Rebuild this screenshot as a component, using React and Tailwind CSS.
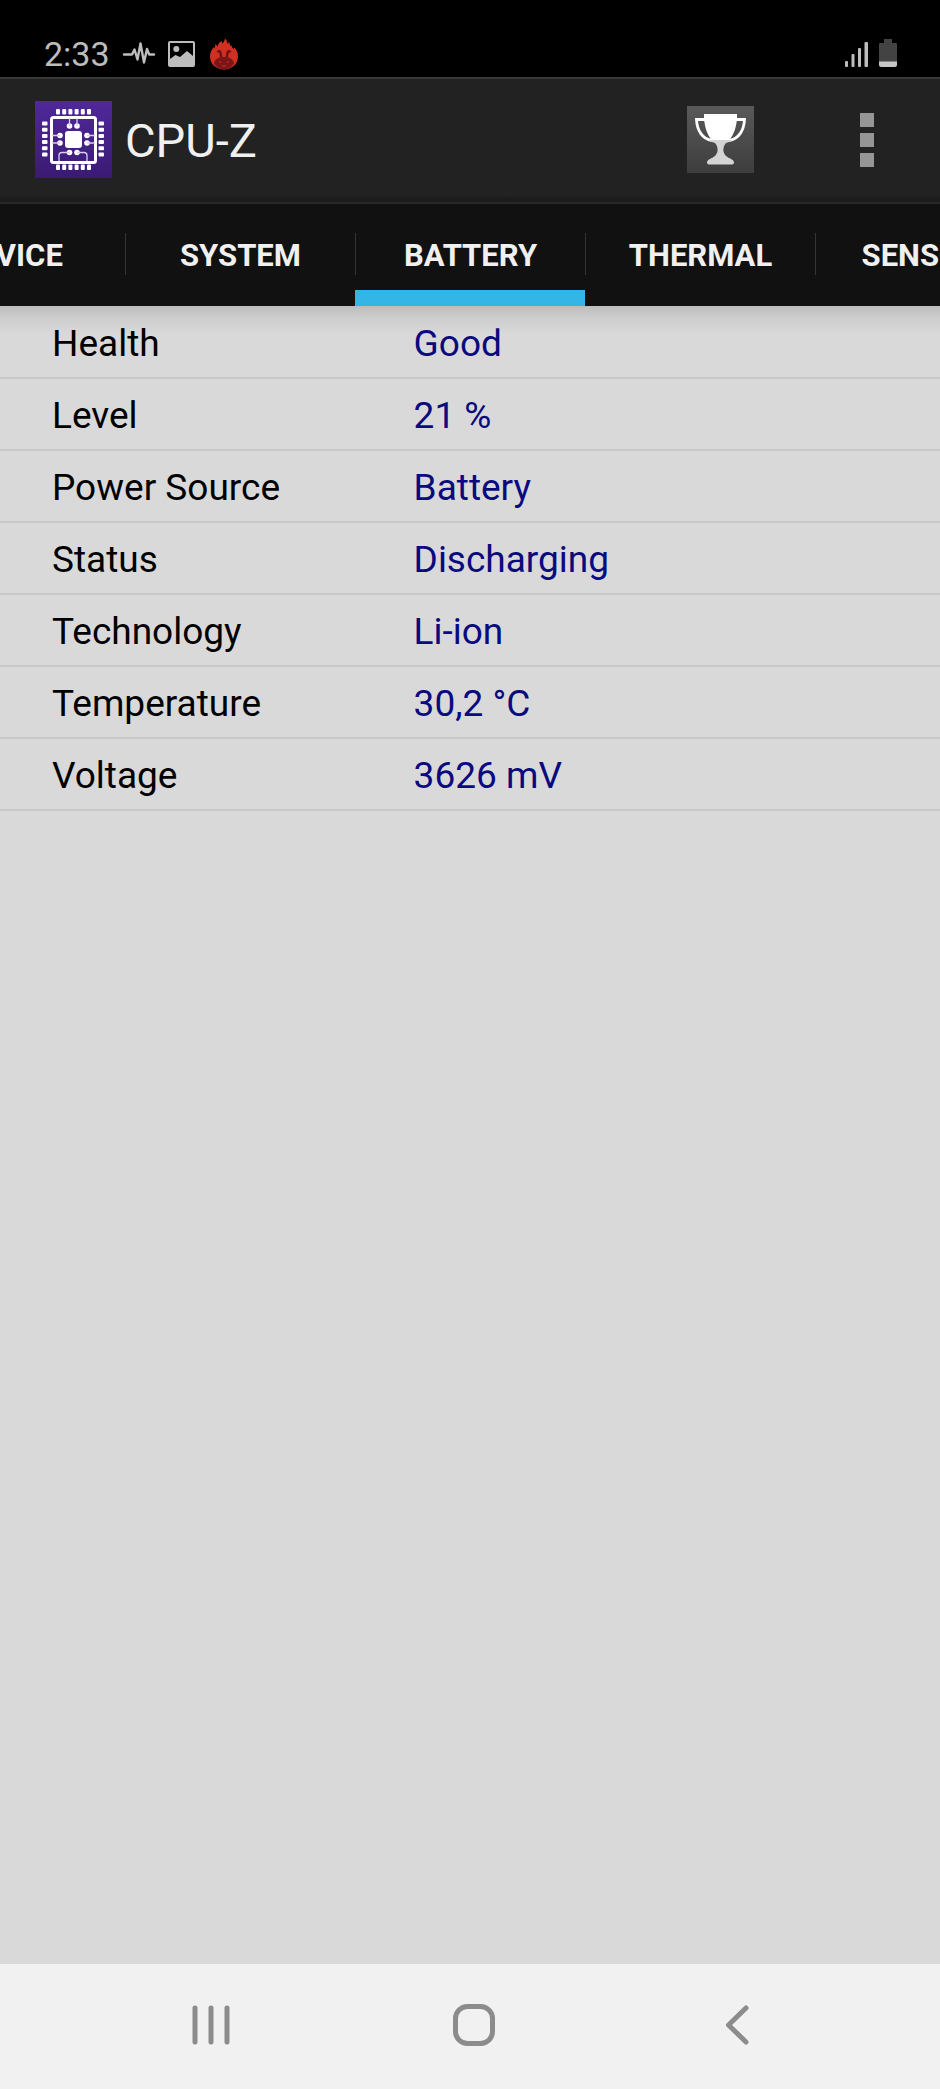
import { useState } from "react";

const TABS = ["Device", "System", "Battery", "Thermal", "Sensors"];

const BATTERY_INFO = [
  ["Health", "Good"],
  ["Level", "21 %"],
  ["Power Source", "Battery"],
  ["Status", "Discharging"],
  ["Technology", "Li-ion"],
  ["Temperature", "30,2 °C"],
  ["Voltage", "3626 mV"],
];

const PINS = [0, 1, 2, 3, 4, 5];

function StatusBar() {
  return (
    <div className="flex h-[77px] items-end bg-black pr-[43px] pb-2 pl-11 text-[#bdbdbd]">
      <span className="text-[34px] leading-[30px]">2:33</span>
      <div className="ml-3 flex h-[31px] items-center gap-3">
        <svg width="34" height="28" viewBox="0 0 34 28" fill="none" aria-hidden>
          <path
            d="M2 14.500h8l2.500-5 3 10 3-16 3.500 19 3-13.500 2.200 5.500H32"
            stroke="currentColor"
            strokeWidth="2.400"
            strokeLinejoin="round"
            strokeLinecap="round"
          />
        </svg>
        <svg width="27" height="26" viewBox="0 0 27 26" aria-hidden>
          <path
            fill="currentColor"
            fillRule="evenodd"
            d="M2 0h23a2 2 0 0 1 2 2v22a2 2 0 0 1-2 2H2a2 2 0 0 1-2-2V2a2 2 0 0 1 2-2zM2 2v16l5.500-4 4.500 2 7-6 6 5V2z"
          />
          <circle cx="8.300" cy="8" r="3" fill="currentColor" />
        </svg>
        <svg className="ml-0.5" width="30" height="32" viewBox="0 0 30 32" aria-hidden>
          <path
            fill="#cf3022"
            d="M15 31.500C7 31.500 1 26 1 18.500c0-3.800 1.600-7.200 3.800-9.500l.5 1.800C6 9.500 6.300 8 6.300 6.200c1 .6 1.600 1.300 2 2.200C9.500 5 11 4 13 3c-.3 1-.2 1.800.2 2.600C14.500 4.500 15.500 3 16 .500c1.800 1.500 2.300 3.500 2.300 5.500l1.800-2c.7 1.500 1 2.600 1 4l1.400-.8c.3 1.800 1 2.800 2.200 3.800l.6-1.500c2.200 2 3.700 5.300 3.700 9C29 26 23 31.500 15 31.500z"
          />
          <path
            d="M9 13.500c2.200-1 3 .5 3 6.500M21 13.500c-2.200-1-3 .5-3 6.500"
            fill="none"
            stroke="#6d1215"
            strokeWidth="2.400"
            strokeLinecap="round"
          />
          <path
            fill="#7d1518"
            d="M15 19c6 0 9.500 2.500 10 6.500-2.300 3.700-6 6-10 6s-7.700-2.300-10-6C5.500 21.500 9 19 15 19z"
          />
          <path
            d="M10 23.500l2.500 1.200M20 23.500l-2.500 1.200M13 28h4"
            stroke="#c8321f"
            strokeWidth="1"
          />
        </svg>
      </div>
      <div className="ml-auto flex items-end gap-2.5 pb-[2px]">
        <svg width="24" height="26" viewBox="0 0 24 26" fill="currentColor" aria-hidden>
          <rect x="0" y="20" width="3" height="6" rx="1" />
          <rect x="6.500" y="13" width="3" height="13" rx="1" />
          <rect x="13" y="7" width="3" height="19" rx="1" />
          <rect x="19.500" y="1" width="3.500" height="25" rx="1" />
        </svg>
        <svg width="18" height="28" viewBox="0 0 18 28" aria-hidden>
          <path fill="#434343" d="M5 0h8v4h4a1 1 0 0 1 1 1v18H0V5a1 1 0 0 1 1-1h4z" />
          <path fill="#c6c6c6" d="M0 22.500h18V26a2 2 0 0 1-2 2H2a2 2 0 0 1-2-2z" />
        </svg>
      </div>
    </div>
  );
}

function CpuLogo() {
  return (
    <svg width="77" height="77" viewBox="0 0 77 77" aria-hidden>
      <defs>
        <linearGradient id="logo-bg" x1="0" y1="0" x2="0" y2="1">
          <stop offset="0" stopColor="#50289a" />
          <stop offset="1" stopColor="#3a1a74" />
        </linearGradient>
      </defs>
      <rect width="77" height="77" fill="url(#logo-bg)" />
      <g fill="#fff">
        {PINS.map((i) => (
          <g key={i}>
            <rect x={21 + i * 6.2} y="8" width="4" height="5.500" rx="1" />
            <rect x={21 + i * 6.2} y="63.500" width="4" height="5.500" rx="1" />
            <rect x="7" y={20.5 + i * 6.2} width="5.500" height="4" rx="1" />
            <rect x="63.500" y={20.5 + i * 6.2} width="5.500" height="4" rx="1" />
          </g>
        ))}
        <rect x="30" y="30" width="17" height="17" rx="3" />
        <circle cx="34.500" cy="25" r="2.800" />
        <circle cx="42" cy="25" r="2.800" />
        <circle cx="34.500" cy="51.500" r="2.800" />
        <circle cx="42" cy="51.500" r="2.800" />
        <circle cx="25" cy="34.500" r="2.800" />
        <circle cx="25" cy="42" r="2.800" />
        <circle cx="52" cy="34.500" r="2.800" />
        <circle cx="52" cy="42" r="2.800" />
      </g>
      <rect x="16.500" y="16.500" width="44" height="45" rx="2" fill="none" stroke="#fff" strokeWidth="3" />
      <g fill="none" stroke="#d9cdf2" strokeWidth="1.300">
        <path d="M34.500 17v8M42 17v8M17 34.500h8M17 42h8M52 34.500h8M52 42h8" />
        <path d="M34.500 51.500H27a3 3 0 0 0-3 3V60M42 51.500h7a3 3 0 0 1 3 3V60" />
      </g>
    </svg>
  );
}

function TrophyIcon() {
  return (
    <svg width="67" height="67" viewBox="0 0 67 67" aria-hidden>
      <defs>
        <linearGradient id="trophy-bg" x1="0" y1="0" x2="0" y2="1">
          <stop offset="0" stopColor="#5a5a5a" />
          <stop offset="1" stopColor="#3d3d3d" />
        </linearGradient>
      </defs>
      <rect width="67" height="67" fill="url(#trophy-bg)" />
      <path
        d="M18 13.500H9.500C10 24 15 33 25 34.500M49 13.500h8.500C57 24 52 33 42 34.500"
        fill="none"
        stroke="#fff"
        strokeWidth="2.800"
      />
      <path fill="#fff" d="M17 8h33v5c-1 9-3 15-7.500 21h-18C20 28 18 22 17 13z" />
      <path
        fill="#d4d4d4"
        d="M22 34h23c-2 2-4 2.500-6 3-3.500 4-3.500 9.500 0 13 3 2.500 8 3.500 8 6.500a2 2 0 0 1-2 2H22a2 2 0 0 1-2-2c0-3 5-4 8-6.500 3.500-3.500 3.500-9 0-13-2-.5-4-1-6-3z"
      />
    </svg>
  );
}

function ActionBar() {
  return (
    <header className="flex h-[127px] items-center border-t-2 border-b-2 border-t-[#383838] border-b-[#292929] bg-[linear-gradient(to_bottom,#222_116px,#1b1b1b_120px)] pr-[58px] pb-0.5 pl-[35px]">
      <CpuLogo />
      <h1 className="ml-[13px] pt-0.5 text-[47px] leading-[56px] text-[#f0f0f0]">CPU-Z</h1>
      <button type="button" aria-label="Ranking" className="ml-auto">
        <TrophyIcon />
      </button>
      <button
        type="button"
        aria-label="More options"
        className="ml-[98px] flex flex-col items-center gap-1.5 px-2"
      >
        <span className="size-[14px] bg-[#959595]" />
        <span className="size-[14px] bg-[#959595]" />
        <span className="size-[14px] bg-[#959595]" />
      </button>
    </header>
  );
}

function TabBar({ active, onSelect }) {
  return (
    <nav className="flex justify-center overflow-hidden bg-[#111]">
      {TABS.map((tab) => (
        <button
          key={tab}
          type="button"
          onClick={() => onSelect(tab)}
          className="flex h-[102px] w-[230px] shrink-0 flex-col justify-end"
        >
          <span className="mb-[15px] w-full border-l border-[#353535] pt-1 text-center text-[31px] leading-[38px] font-bold text-[#f0f0f0] uppercase">
            {tab}
          </span>
          <span className={`h-4 w-full ${tab === active ? "bg-[#33b5e5]" : ""}`} />
        </button>
      ))}
    </nav>
  );
}

function NavBar() {
  return (
    <footer className="grid h-[125px] grid-cols-3 items-center bg-[#f1f1f1] pr-[72px] pb-1 pl-20 text-[#8c8c8c]">
      <button type="button" aria-label="Recent apps" className="flex justify-center">
        <svg width="44" height="44" viewBox="0 0 44 44" aria-hidden>
          <path
            d="M6 5v34M22 5v34M38 5v34"
            stroke="currentColor"
            strokeWidth="5"
            strokeLinecap="round"
          />
        </svg>
      </button>
      <button type="button" aria-label="Home" className="flex justify-center">
        <svg width="44" height="44" viewBox="0 0 44 44" fill="none" aria-hidden>
          <rect x="3.500" y="3.500" width="37" height="37" rx="12" stroke="currentColor" strokeWidth="5" />
        </svg>
      </button>
      <button type="button" aria-label="Back" className="flex justify-center">
        <svg width="44" height="44" viewBox="0 0 44 44" fill="none" aria-hidden>
          <path
            d="M31 5L13.500 22 31 39"
            stroke="currentColor"
            strokeWidth="5"
            strokeLinecap="round"
            strokeLinejoin="round"
          />
        </svg>
      </button>
    </footer>
  );
}

export default function App() {
  const [tab, setTab] = useState("Battery");

  return (
    <div className="flex min-h-screen flex-col bg-[#d9d9d9] font-[Roboto,sans-serif]">
      <StatusBar />
      <ActionBar />
      <TabBar active={tab} onSelect={setTab} />
      <main className="flex-1 bg-[linear-gradient(to_bottom,#bdbdbd,#cdcdcd_12px,#d9d9d9_28px)]">
        {tab === "Battery" ? (
          <table className="w-full table-fixed text-left text-[37px] leading-[42px]">
            <tbody>
              {BATTERY_INFO.map(([label, value]) => (
                <tr key={label} className="h-[72px] border-b-2 border-[#c8c8c8]">
                  <th scope="row" className="w-[44%] pt-1 pl-[52px] font-normal text-black">
                    {label}
                  </th>
                  <td className="pt-1 text-[#0a0a80]">{value}</td>
                </tr>
              ))}
            </tbody>
          </table>
        ) : null}
      </main>
      <NavBar />
    </div>
  );
}
